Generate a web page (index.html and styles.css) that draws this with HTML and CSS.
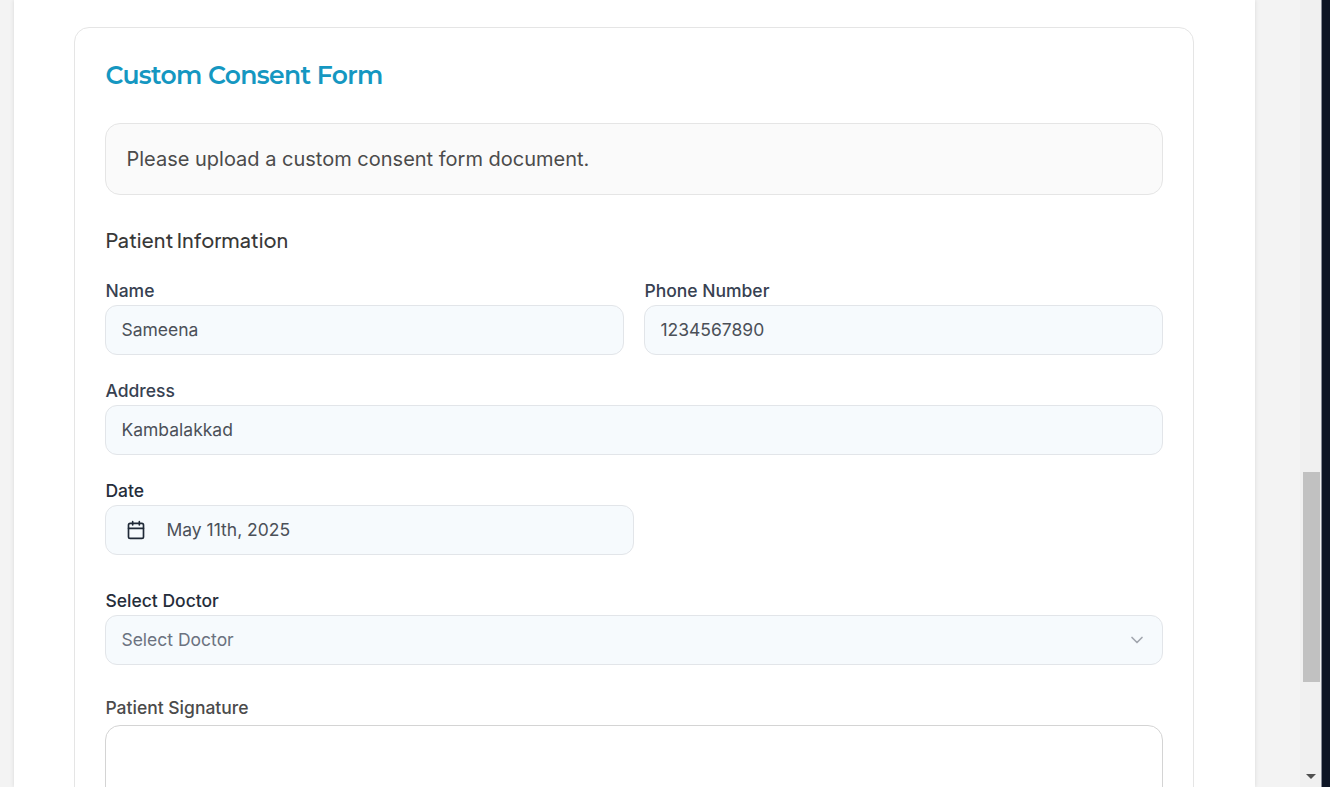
FILE: index.html
```html
<!DOCTYPE html>
<html lang="en">
<head>
<meta charset="utf-8">
<title>Custom Consent Form</title>
<link rel="stylesheet" href="styles.css">
</head>
<body>
<div class="app">
  <main class="viewport">
    <div class="sheet">
      <section class="card">
        <h1 class="title">Custom Consent Form</h1>
        <div class="notice"><span>Please upload a custom consent form document.</span></div>
        <h2 class="subtitle">Patient Information</h2>
        <div class="row">
          <div class="field"><label class="label">Name</label><div class="control">Sameena</div></div>
          <div class="field"><label class="label">Phone Number</label><div class="control">1234567890</div></div>
        </div>
        <div class="field"><label class="label">Address</label><div class="control">Kambalakkad</div></div>
        <div class="field date-field">
          <label class="label dark">Date</label>
          <div class="control date-control">
            <svg class="calendar" viewBox="0 0 24 24" fill="none" stroke="currentColor" stroke-width="2" stroke-linecap="round" stroke-linejoin="round"><path d="M8 2v4M16 2v4M3 10h18"/><rect x="3" y="4" width="18" height="18" rx="2"/></svg>
            <span>May 11th, 2025</span>
          </div>
        </div>
        <div class="field doctor-field">
          <label class="label dark">Select Doctor</label>
          <div class="control select"><span>Select Doctor</span>
            <svg class="chevron" viewBox="0 0 24 24" fill="none" stroke="currentColor" stroke-width="2" stroke-linecap="round" stroke-linejoin="round"><path d="m6 9 6 6 6-6"/></svg>
          </div>
        </div>
        <div class="signature-field">
          <label class="label signature-label">Patient Signature</label>
          <div class="signature"></div>
        </div>
      </section>
    </div>
  </main>
  <aside class="scrollbar">
    <div class="thumb"></div>
    <svg class="arrow" viewBox="0 0 10 5"><path d="M0 0h10L5 5z" fill="#505050"/></svg>
  </aside>
  <div class="edge"></div>
</div>
</body>
</html>
```
FILE: styles.css
```css
* { box-sizing: border-box; }
body { margin: 0; overflow: hidden; font-family: Inter, "Liberation Sans", sans-serif; }
.app { display: flex; height: 787px; overflow: hidden; background: #f3f3f3; }
.viewport { width: 1300px; flex: none; padding-left: 14px; }
.sheet { width: 1241px; height: 787px; padding: 27px 60px 0 60.45px; background: #fff; box-shadow: 0 0 4px rgba(0, 0, 0, .11); }
.card { width: 1120px; height: 900px; padding: 31px 30px 0; border: 1px solid #e5e5e5; border-radius: 15px; }
.title { margin: 0; height: 64px; line-height: 33px; font-family: Montserrat, Inter, sans-serif; font-size: 25px; font-weight: 600; letter-spacing: -.025em; color: #1597c1; white-space: nowrap; }
.notice { display: flex; align-items: center; height: 72px; padding-left: 20px; border: 1px solid #e5e5e5; border-radius: 15px; background: #fafafa; color: #4b4b4b; font-size: 20px; white-space: nowrap; }
.subtitle { margin: 30px 0 0; height: 56px; line-height: 30px; font-family: "Plus Jakarta Sans", Inter, sans-serif; font-size: 20px; font-weight: 500; color: #383838; white-space: nowrap; }
.row { display: grid; grid-template-columns: 1fr 1fr; gap: 20px; }
.field { height: 100px; }
.label { display: block; height: 24px; line-height: 19px; font-size: 17.5px; font-weight: 480; color: #374151; white-space: nowrap; }
.dark { color: #252d3a; }
.control { display: flex; align-items: center; width: 100%; height: 50px; padding: 0 15px 2px; border: 1px solid #e2e5e9; border-radius: 12px; background: #f6fafd; color: #4b5058; font-size: 17.5px; white-space: nowrap; }
.date-field { width: 529px; height: 110px; }
.date-control { padding-left: 20px; gap: 20px; }
.calendar { width: 20px; height: 20px; margin-top: 2px; color: #1f2937; }
.doctor-field { height: 107px; }
.select { justify-content: space-between; color: #6b7280; }
.chevron { width: 20px; height: 20px; margin-top: 2px; color: #a1a6ae; }
.signature-label { color: #4b4b4b; height: 27px; }
.signature { height: 200px; border: 1px solid #d4d4d4; border-radius: 15px; }
.scrollbar { display: flex; flex-direction: column; align-items: center; width: 21px; flex: none; padding-top: 472px; background: #f0f0f0; }
.thumb { width: 17px; height: 210px; margin-left: 1px; background: #c1c1c1; }
.arrow { width: 10px; height: 5px; margin-top: 92px; }
.edge { flex: 1; border-left: 1px solid #858a96; background: #0d1525; }
```
